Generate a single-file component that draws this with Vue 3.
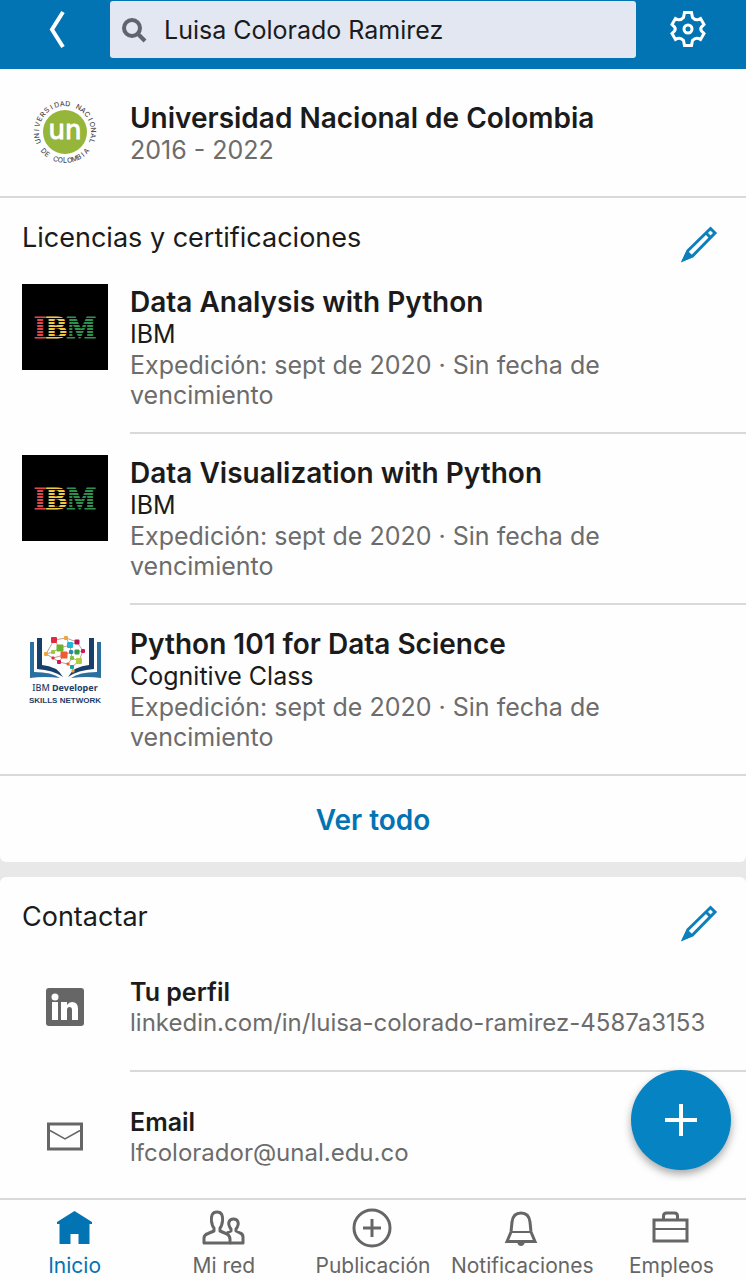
<script setup>
import { ref } from 'vue'

const query = ref('Luisa Colorado Ramirez')

const certificates = [
  { title: 'Data Analysis with Python', issuer: 'IBM', logo: 'ibm' },
  { title: 'Data Visualization with Python', issuer: 'IBM', logo: 'ibm' },
  { title: 'Python 101 for Data Science', issuer: 'Cognitive Class', logo: 'skills' },
]

const tabs = [
  { id: 'home', label: 'Inicio' },
  { id: 'network', label: 'Mi red' },
  { id: 'post', label: 'Publicación' },
  { id: 'alerts', label: 'Notificaciones' },
  { id: 'jobs', label: 'Empleos' },
]
const activeTab = ref('home')

// Letters spread evenly around the university seal, angles in degrees from the top.
const spread = (text, from, to) =>
  [...text].map((char, i) => ({ char, angle: from + ((to - from) * i) / (text.length - 1) }))
const sealTop = spread('UNIVERSIDAD NACIONAL', -109, 109)
const sealBottom = spread('DE COLOMBIA', 48, -48)

const stripes = [0, 1, 2, 3, 4, 5, 6]

// Network drawing: each node is a square centred on x, y.
const nodes = [
  { x: 32, y: 14, s: 6, c: '#e5293e' },
  { x: 44, y: 12, s: 4, c: '#f2a33a' },
  { x: 55, y: 16, s: 5, c: '#b5124f' },
  { x: 38, y: 22, s: 7, c: '#6ab42d' },
  { x: 48, y: 19, s: 6, c: '#22b4d6' },
  { x: 24, y: 28, s: 4, c: '#f2a33a' },
  { x: 31, y: 26, s: 4, c: '#9bca3c' },
  { x: 42, y: 29, s: 7, c: '#ee5a31' },
  { x: 49, y: 26, s: 4, c: '#2388ad' },
  { x: 55, y: 26, s: 5, c: '#2f9d4a' },
  { x: 61, y: 25, s: 4, c: '#d0175c' },
  { x: 31, y: 32, s: 3, c: '#e5293e' },
  { x: 37, y: 36, s: 4, c: '#d0175c' },
  { x: 50, y: 32, s: 4, c: '#7fc242' },
  { x: 57, y: 35, s: 6, c: '#b4cf36' },
  { x: 46, y: 38, s: 3, c: '#ee5a31' },
  { x: 50, y: 41, s: 4, c: '#1ba39c' },
  { x: 51, y: 45, s: 3, c: '#f2a33a' },
]
const edges = [
  [0, 1], [1, 2], [0, 3], [1, 4], [3, 4], [4, 2], [0, 5], [5, 6], [6, 3], [3, 7], [4, 8], [8, 9],
  [9, 10], [2, 10], [5, 11], [11, 7], [7, 12], [11, 12], [7, 8], [8, 13], [13, 14], [10, 14],
  [12, 15], [15, 16], [16, 14], [16, 17], [13, 15],
]
const links = edges
  .map(([a, b]) => `M${nodes[a].x} ${nodes[a].y}L${nodes[b].x} ${nodes[b].y}`)
  .join('')
</script>

<template>
  <div class="page">
    <header class="topbar">
      <button class="icon-button" aria-label="Atrás">
        <svg width="18" height="40" viewBox="0 0 18 40" fill="none" stroke="#fff" stroke-width="4">
          <path d="M15 3L4 20.500L15 38" />
        </svg>
      </button>
      <label class="search">
        <svg width="26" height="26" viewBox="0 0 26 26" fill="none" stroke="#5f656c" stroke-width="4">
          <circle cx="11" cy="11" r="8" />
          <path d="M16 16L24 24" />
        </svg>
        <input v-model="query" type="text" aria-label="Buscar" />
      </label>
      <button class="icon-button" aria-label="Configuración">
        <svg width="38" height="38" viewBox="0 0 38 38" fill="none" stroke="#fff" stroke-width="3">
          <path d="M15.500 2.500H22.500L23.500 7.500Q26 10.500 29.500 9.500L31.500 8.500L35 14.500L32.500 17Q31 19 32.500 21L35 23.500L31.500 29.500L29.500 28.500Q26 27.500 23.500 30.500L22.500 35.500H15.500L14.500 30.500Q12 27.500 8.500 28.500L6.500 29.500L3 23.500L5.500 21Q7 19 5.500 17L3 14.500L6.500 8.500L8.500 9.500Q12 10.500 14.500 7.500Z" />
          <circle cx="19" cy="19" r="4" />
        </svg>
      </button>
    </header>

    <main>
      <section class="card first">
        <article class="row school">
          <div class="media">
            <svg width="72" height="72" viewBox="-36 -36 72 72" class="seal">
              <circle r="22" fill="#96b53b" />
              <text y="7" class="seal-name">un</text>
              <text v-for="(l, i) in sealTop" :key="'t' + i" y="-26" :transform="`rotate(${l.angle})`" class="seal-letter">{{ l.char }}</text>
              <text v-for="(l, i) in sealBottom" :key="'b' + i" y="31" :transform="`rotate(${l.angle})`" class="seal-letter">{{ l.char }}</text>
            </svg>
          </div>
          <div class="text">
            <h3 class="title">Universidad Nacional de Colombia</h3>
            <p class="meta">2016 - 2022</p>
          </div>
        </article>

        <div class="section-head">
          <h2>Licencias y certificaciones</h2>
          <button class="edit" aria-label="Editar licencias y certificaciones">
            <svg width="38" height="38" viewBox="0 0 38 38" fill="none" stroke="#0e7fbd" stroke-width="3">
              <path d="M30.500 3.500L35 8L13 30.500L4 34.500L8 25.500Z" />
              <path d="M26 8L30.500 12.500" />
              <path d="M7 25L14 32L1 37Z" fill="#0e7fbd" stroke="none" />
            </svg>
          </button>
        </div>

        <article v-for="item in certificates" :key="item.title" class="row certificate">
          <div class="media">
            <svg v-if="item.logo === 'ibm'" width="86" height="86" viewBox="0 0 86 86" role="img" aria-label="IBM">
              <rect width="86" height="86" fill="#000" />
              <text x="43" y="54" class="ibm"><tspan class="red">I</tspan><tspan class="yellow">B</tspan><tspan class="green">M</tspan></text>
              <rect v-for="n in stripes" :key="n" x="10" :y="34 + n * 3" width="66" height="1" fill="#000" />
            </svg>
            <svg v-else width="86" height="86" viewBox="0 0 86 86" role="img" aria-label="IBM Developer Skills Network">
              <path d="M8 16H12V46Q30 46 38 52Q22 50 8 52Z" fill="#2a6f9f" />
              <path d="M15 12H20V39Q35 40 41 51Q31 44 15 43Z" fill="#163f6b" />
              <path d="M79 16H75V46Q57 46 49 52Q65 50 79 52Z" fill="#2a6f9f" />
              <path d="M72 12H67V39Q52 40 46 51Q56 44 72 43Z" fill="#163f6b" />
              <path :d="links" fill="none" stroke="#b9a58c" stroke-width="1" />
              <rect v-for="(n, i) in nodes" :key="i" :x="n.x - n.s / 2" :y="n.y - n.s / 2" :width="n.s" :height="n.s" rx="1" :fill="n.c" />
              <text x="43" y="65" class="dev"><tspan font-weight="500">IBM </tspan><tspan font-weight="700">Developer</tspan></text>
              <text x="43" y="77" class="skills">SKILLS NETWORK</text>
            </svg>
          </div>
          <div class="text">
            <h3 class="title">{{ item.title }}</h3>
            <p class="issuer">{{ item.issuer }}</p>
            <p class="meta">Expedición: sept de 2020 · Sin fecha de vencimiento</p>
          </div>
        </article>

        <a class="see-all" href="#todo">Ver todo</a>
      </section>

      <section class="card">
        <div class="section-head">
          <h2>Contactar</h2>
          <button class="edit" aria-label="Editar contacto">
            <svg width="38" height="38" viewBox="0 0 38 38" fill="none" stroke="#0e7fbd" stroke-width="3">
              <path d="M30.500 3.500L35 8L13 30.500L4 34.500L8 25.500Z" />
              <path d="M26 8L30.500 12.500" />
              <path d="M7 25L14 32L1 37Z" fill="#0e7fbd" stroke="none" />
            </svg>
          </button>
        </div>

        <article class="row contact">
          <div class="media">
            <svg width="38" height="38" viewBox="0 0 38 38" role="img" aria-label="LinkedIn">
              <rect width="38" height="38" rx="3" fill="#666" />
              <g fill="#fff">
                <circle cx="9" cy="9" r="3.500" />
                <rect x="6" y="14" width="6" height="18" />
                <path d="M15 14H21V17Q23 14 26 14Q32 14 32 21V32H26V22Q26 19 23.500 19Q21 19 21 22V32H15Z" />
              </g>
            </svg>
          </div>
          <div class="text">
            <h3 class="subtitle">Tu perfil</h3>
            <a class="value" href="#perfil">linkedin.com/in/luisa-colorado-ramirez-4587a3153</a>
          </div>
        </article>

        <article class="row contact">
          <div class="media">
            <svg width="38" height="38" viewBox="0 0 38 38" fill="none" stroke="#666">
              <rect x="2.500" y="6" width="33" height="25" stroke-width="3" />
              <path d="M4 12.500L19 21L34 12.500" stroke-width="1.500" />
            </svg>
          </div>
          <div class="text">
            <h3 class="subtitle">Email</h3>
            <a class="value" href="#email">lfcolorador@unal.edu.co</a>
          </div>
        </article>
      </section>
    </main>

    <div class="dock">
      <button class="fab" aria-label="Añadir">
        <svg width="34" height="34" viewBox="0 0 34 34" stroke="#fff" stroke-width="4">
          <path d="M17 1V33M1 17H33" />
        </svg>
      </button>
      <nav class="tabs">
        <a v-for="tab in tabs" :key="tab.id" :href="'#' + tab.id" :class="{ active: tab.id === activeTab }" @click="activeTab = tab.id">
          <svg width="44" height="40" viewBox="0 0 44 40" fill="none" stroke="currentColor" stroke-width="3">
            <path v-if="tab.id === 'home'" d="M21.500 1L39 12V14H36.500V34H25.500V24H17.500V34H6.500V14H4V12Z" fill="currentColor" stroke="none" />
            <g v-else-if="tab.id === 'network'" stroke-linejoin="round">
              <path d="M15 2C20 2 21 6 20.500 11C20 15 19 17 18 18V21L25 24Q28 26 28 29V33H2V28Q2 25 6 23.500L12 21V18C11 17 10 15 9.500 11C9 6 10 2 15 2Z" />
              <path d="M25 23L29 21V19Q26 15 27 12Q28 9 31.500 9Q35 9 36 12Q37 15 34 19V21L38 23Q41 24 41 27V33H28" />
            </g>
            <g v-else-if="tab.id === 'post'">
              <circle cx="21" cy="18" r="18" />
              <path d="M21 9V27M12 18H30" />
            </g>
            <g v-else-if="tab.id === 'alerts'">
              <path d="M7 31.500L11 22L12 12Q13 3 21 3Q29 3 30 12L31 22L35 31.500Z" />
              <path d="M11 22H31" stroke-width="2" />
              <path d="M17 32Q18 36 21 36Q24 36 25 32Z" fill="currentColor" stroke="none" />
            </g>
            <g v-else>
              <path d="M14.500 9V6Q14.500 3 17.500 3H25.500Q28.500 3 28.500 6V9" />
              <rect x="5" y="10" width="33" height="21" />
              <path d="M5 19H38" stroke-width="2" />
            </g>
          </svg>
          <span>{{ tab.label }}</span>
        </a>
      </nav>
    </div>
  </div>
</template>

<style>
body {
  margin: 0;
  background: #e8e8e8;
}
</style>

<style scoped>
.page {
  display: flex;
  flex-direction: column;
  min-height: 100vh;
  font-family: Inter, "Liberation Sans", sans-serif;
  color: #1b1b1b;
  background: #e8e8e8;
}

h2,
h3,
p {
  margin: 0;
}

button {
  padding: 0;
  border: 0;
  background: none;
  cursor: pointer;
}

a {
  text-decoration: none;
}

svg {
  display: block;
  flex: none;
  overflow: visible;
}

.topbar {
  display: grid;
  grid-template-columns: 110px 1fr 110px;
  height: 69px;
  background: #0274b3;
}

.icon-button {
  display: flex;
  align-items: center;
  justify-content: center;
  height: 58px;
  padding-right: 6px;
}

.icon-button:first-child {
  padding: 0 0 0 4px;
}

.search {
  display: flex;
  align-items: center;
  gap: 17px;
  height: 57px;
  margin-top: 1px;
  padding: 0 11px;
  box-sizing: border-box;
  border-radius: 3px;
  background: #e2e7f2;
}

.search input {
  flex: 1;
  min-width: 0;
  padding: 0;
  border: 0;
  outline: 0;
  background: none;
  color: #1b1b1b;
  font: 400 25px/32px Inter, "Liberation Sans", sans-serif;
}

main {
  display: flex;
  flex: 1;
  flex-direction: column;
  gap: 15px;
}

.card {
  border-radius: 6px;
  background: #fefefe;
}

.card.first {
  border-radius: 0 0 6px 6px;
}

.card:last-child {
  flex: 1;
  border-radius: 6px 6px 0 0;
}

.row {
  display: grid;
  grid-template-columns: 86px 1fr;
  column-gap: 22px;
  padding-left: 22px;
}

.media {
  display: flex;
  justify-content: center;
}

.school {
  padding-top: 32px;
  padding-bottom: 31px;
  border-bottom: 2px solid #d9d9d9;
}

.school .media {
  height: 62px;
  align-items: center;
}

.seal-name {
  font: 400 26px "DejaVu Sans", sans-serif;
  text-anchor: middle;
  fill: #fff;
  stroke: #fff;
  stroke-width: 1;
}

.seal-letter {
  font: 500 7px Inter, sans-serif;
  text-anchor: middle;
  fill: #4b4b55;
}

.ibm {
  font: 700 31px "Liberation Serif", serif;
  text-anchor: middle;
  stroke-width: 1;
}

.red {
  fill: #e0474c;
  stroke: #e0474c;
}

.yellow {
  fill: #ecc94b;
  stroke: #ecc94b;
}

.green {
  fill: #2f9150;
  stroke: #2f9150;
}

.dev {
  font: 600 9px "Noto Sans", sans-serif;
  text-anchor: middle;
  fill: #1d3f69;
}

.skills {
  font: 700 8px "Liberation Sans", sans-serif;
  text-anchor: middle;
  fill: #1d3f69;
}

.title {
  font-size: 28px;
  font-weight: 600;
  line-height: 34px;
}

.issuer {
  font-size: 25px;
  line-height: 31px;
}

.meta {
  color: #6c6c6c;
  font-size: 25px;
  line-height: 30px;
}

.section-head {
  display: flex;
  align-items: flex-start;
  justify-content: space-between;
  height: 65px;
  padding: 0 28px 0 22px;
}

.section-head h2 {
  padding-top: 23px;
  font-size: 27px;
  font-weight: 400;
  line-height: 34px;
}

.edit {
  margin-top: 27px;
}

.certificate .text,
.contact .text {
  border-bottom: 2px solid #d9d9d9;
}

.certificate .media {
  padding-top: 21px;
}

.certificate .text {
  padding: 22px 120px 22px 0;
}

.see-all {
  display: block;
  padding: 27px 0 25px;
  border-top: 2px solid #d9d9d9;
  margin-top: -2px;
  color: #0274b3;
  font-size: 28px;
  font-weight: 600;
  line-height: 34px;
  text-align: center;
}

.contact .media {
  padding-top: 46px;
}

.contact .text {
  padding: 35px 0 31px;
}

.contact:last-child .text {
  padding-bottom: 29px;
  border: 0;
}

.subtitle {
  font-size: 25px;
  font-weight: 600;
  line-height: 30px;
}

.value {
  display: block;
  color: #6c6c6c;
  font-size: 24px;
  line-height: 32px;
}

.dock {
  position: sticky;
  bottom: 0;
}

.fab {
  position: absolute;
  right: 15px;
  bottom: 110px;
  display: flex;
  align-items: center;
  justify-content: center;
  width: 100px;
  height: 100px;
  border-radius: 50%;
  background: #0583c3;
  box-shadow: 0 4px 8px rgba(0, 0, 0, 0.35);
}

.tabs {
  display: grid;
  grid-template-columns: repeat(5, 1fr);
  height: 80px;
  border-top: 2px solid #d9d9d9;
  background: #fefefe;
}

.tabs a {
  display: flex;
  flex-direction: column;
  align-items: center;
  gap: 2px;
  padding-top: 10px;
  color: #666;
  font-size: 21px;
  line-height: 28px;
  white-space: nowrap;
}

.tabs a.active {
  color: #0274b3;
}
</style>
